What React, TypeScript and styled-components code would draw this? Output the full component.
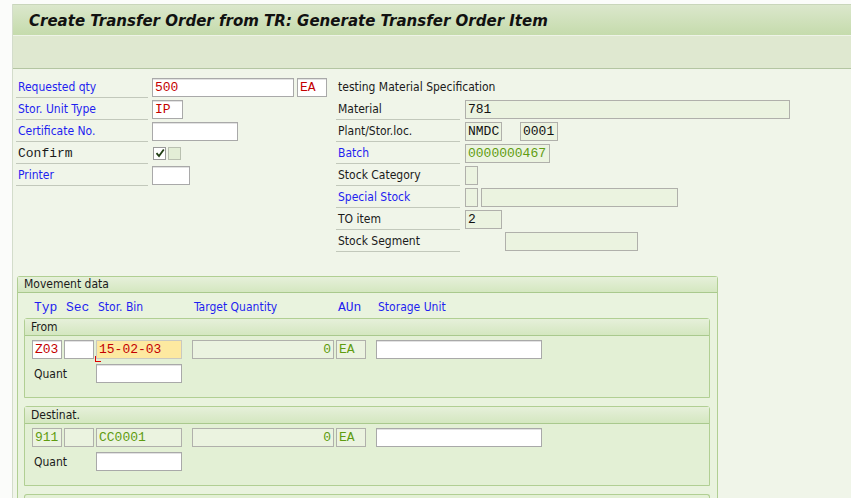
import React from "react";
import styled, { createGlobalStyle, css } from "styled-components";

const GlobalStyle = createGlobalStyle`
  html, body { margin: 0; padding: 0; background: #fbfcfa; overflow: hidden; }
  body { font-family: "DejaVu Sans Condensed", "DejaVu Sans", sans-serif; }
`;

const SANS = `"DejaVu Sans Condensed", "DejaVu Sans", sans-serif`;
const MONO = `"Liberation Mono", "DejaVu Sans Mono", monospace`;

const Page = styled.div`
  display: flex;
  width: 851px;
  height: 498px;
  overflow: hidden;
  background: #fbfcfa;
`;

const Strip = styled.div`
  width: 12px;
  flex: none;
  background: #fbfcfa;
`;

const Main = styled.div`
  flex: 1;
  margin-top: 4px;
  border-left: 1px solid #d3dccb;
  display: flex;
  flex-direction: column;
  min-width: 0;
`;

const TitleBar = styled.div`
  flex: none;
  height: 30px;
  border-top: 1px solid #c9d6bb;
  background: linear-gradient(#dbe7cc, #c5dbac);
  display: flex;
  align-items: center;
  padding-left: 16px;
  border-bottom: 1px solid #eef3e7;
`;

const Title = styled.h1`
  margin: 0;
  font-family: ${SANS};
  font-size: 16.7px;
  font-weight: bold;
  font-style: italic;
  color: #111;
  white-space: nowrap;
`;

const Toolbar = styled.div`
  flex: none;
  height: 32px;
  background: #dfe8d0;
  border-bottom: 1px solid #b4c5a2;
`;

const Content = styled.div`
  flex: 1 0 auto;
  background: #f0f5e9;
  padding: 7px 0 0 3px;
  display: flex;
  flex-direction: column;
`;

const TopForm = styled.div`
  display: flex;
`;

const Col = styled.div<{ $w?: number }>`
  display: flex;
  flex-direction: column;
  width: ${(p) => (p.$w ? `${p.$w}px` : "auto")};
`;

const Row = styled.div<{ $labelW: number; $gap: number }>`
  display: grid;
  grid-template-columns: ${(p) => p.$labelW}px auto;
  column-gap: ${(p) => p.$gap}px;
  height: 22px;
  align-items: center;
`;

const Label = styled.div<{ $tone?: "blue" | "black"; $mono?: boolean; $line?: boolean }>`
  height: 21px;
  line-height: 21px;
  box-sizing: border-box;
  padding-left: 2px;
  font-family: ${(p) => (p.$mono ? MONO : SANS)};
  font-size: ${(p) => (p.$mono ? "13px" : "12px")};
  color: ${(p) => (p.$tone === "blue" ? "#1f1ff0" : "#1a1a1a")};
  border-bottom: ${(p) => (p.$line === false ? "1px solid transparent" : "1px solid #c2c8bb")};
  white-space: nowrap;
`;

const Fields = styled.div`
  display: flex;
  align-items: center;
`;

type Kind = "input" | "readonly" | "yellow" | "disabled";
type Tone = "black" | "red" | "green";

const Field = styled.div<{ $w: number; $kind?: Kind; $tone?: Tone; $ml?: number; $right?: boolean }>`
  position: relative;
  box-sizing: border-box;
  width: ${(p) => p.$w}px;
  height: 19px;
  margin-left: ${(p) => p.$ml ?? 0}px;
  border: 1px solid #a9a9a9;
  font-family: ${MONO};
  font-size: 13px;
  line-height: 17px;
  padding: 0 2px;
  text-align: ${(p) => (p.$right ? "right" : "left")};
  white-space: nowrap;
  overflow: hidden;
  color: ${(p) => (p.$tone === "red" ? "#c40000" : p.$tone === "green" ? "#5f9c10" : "#111")};
  ${(p) =>
    p.$kind === "readonly"
      ? css`
          background: #ebf3e0;
          border-color: #b0b0ab;
        `
      : p.$kind === "yellow"
      ? css`
          background: #fde9a0;
          border-color: #c9c9c0;
          overflow: visible;
        `
      : p.$kind === "disabled"
      ? css`
          background: #e3efd6;
          border-color: #b0b4aa;
        `
      : css`
          background: #fff;
          border-color: #a9a9a9;
          box-shadow: inset 0 1px 0 #e2e2e2;
        `}
`;

const ErrorMark = styled.span`
  position: absolute;
  left: -2px;
  bottom: -4px;
  width: 5px;
  height: 5px;
  border-left: 1px solid #e00000;
  border-bottom: 1px solid #e00000;
`;

const Check = styled.div<{ $disabled?: boolean; $ml?: number }>`
  box-sizing: border-box;
  width: 13px;
  height: 13px;
  margin-left: ${(p) => p.$ml ?? 0}px;
  border: 1px solid ${(p) => (p.$disabled ? "#b9c0b0" : "#999")};
  background: ${(p) => (p.$disabled ? "#e3eed6" : "#fff")};
  display: flex;
  align-items: center;
  justify-content: center;
`;

const Group = styled.div`
  margin: 24px 0 0 1px;
  width: 701px;
  box-sizing: border-box;
  border: 1px solid #b1cf93;
  border-bottom: none;
  border-radius: 3px 3px 0 0;
  background: #e9f3de;
  flex: 1 0 auto;
`;

const GroupHead = styled.div<{ $h: number }>`
  height: ${(p) => p.$h}px;
  box-sizing: border-box;
  line-height: ${(p) => p.$h - 1}px;
  padding-left: 6px;
  font-family: ${SANS};
  font-size: 12px;
  color: #1a1a1a;
  background: linear-gradient(#e6f0da, #d4e7c0);
  border-bottom: 1px solid #a9c98d;
`;

const GroupBody = styled.div`
  padding: 5px 7px 0 6px;
`;

const ColHeads = styled.div`
  display: flex;
  align-items: center;
  height: 18px;
  margin: 0 0 2px 8px;
`;

const ColHead = styled.div<{ $w: number; $mono?: boolean }>`
  width: ${(p) => p.$w}px;
  padding-left: 2px;
  box-sizing: border-box;
  font-family: ${(p) => (p.$mono ? MONO : SANS)};
  font-size: ${(p) => (p.$mono ? "13px" : "12px")};
  color: #1f1ff0;
  white-space: nowrap;
`;

const SubGroup = styled.div<{ $open?: boolean }>`
  box-sizing: border-box;
  border: 1px solid #b1cf93;
  border-radius: 3px 3px 0 0;
  background: #e3f0d5;
  margin-bottom: 8px;
  ${(p) =>
    p.$open &&
    css`
      height: 20px;
      border-bottom: none;
    `}
`;

const SubBody = styled.div`
  padding: 4px 7px 14px 7px;
  display: flex;
  flex-direction: column;
  gap: 5px;
`;

const FieldRow = styled.div`
  display: flex;
  align-items: center;
`;

const QuantLabel = styled.div`
  width: 64px;
  padding-left: 2px;
  box-sizing: border-box;
  font-family: ${SANS};
  font-size: 12px;
  color: #1a1a1a;
`;

const CheckMark = () => (
  <svg width="10" height="10" viewBox="0 0 10 10">
    <path d="M1.5 5.2 L4 8 L8.8 1.5" fill="none" stroke="#1f3d12" strokeWidth="1.8" />
  </svg>
);

type LeftRow = { label: string; tone: "blue" | "black"; mono?: boolean; content: React.ReactNode };

const leftRows: LeftRow[] = [
  {
    label: "Requested qty",
    tone: "blue",
    content: (
      <>
        <Field $w={142} $tone="red">500</Field>
        <Field $w={30} $ml={3} $tone="red">EA</Field>
      </>
    ),
  },
  { label: "Stor. Unit Type", tone: "blue", content: <Field $w={31} $tone="red">IP</Field> },
  { label: "Certificate No.", tone: "blue", content: <Field $w={86} /> },
  {
    label: "Confirm",
    tone: "black",
    mono: true,
    content: (
      <>
        <Check $ml={1}>
          <CheckMark />
        </Check>
        <Check $disabled $ml={2} />
      </>
    ),
  },
  { label: "Printer", tone: "blue", content: <Field $w={38} /> },
];

type RightRow = { label: string; tone: "blue" | "black"; line?: boolean; content?: React.ReactNode };

const rightRows: RightRow[] = [
  { label: "testing Material Specification", tone: "black", line: false },
  { label: "Material", tone: "black", content: <Field $w={325} $kind="readonly">781</Field> },
  {
    label: "Plant/Stor.loc.",
    tone: "black",
    content: (
      <>
        <Field $w={37} $kind="readonly">NMDC</Field>
        <Field $w={38} $ml={18} $kind="readonly">0001</Field>
      </>
    ),
  },
  { label: "Batch", tone: "blue", content: <Field $w={85} $kind="readonly" $tone="green">0000000467</Field> },
  { label: "Stock Category", tone: "black", content: <Field $w={13} $kind="readonly" /> },
  {
    label: "Special Stock",
    tone: "blue",
    content: (
      <>
        <Field $w={13} $kind="readonly" />
        <Field $w={197} $ml={3} $kind="readonly" />
      </>
    ),
  },
  { label: "TO item", tone: "black", content: <Field $w={37} $kind="readonly">2</Field> },
  { label: "Stock Segment", tone: "black", content: <Field $w={133} $ml={40} $kind="readonly" /> },
];

export default function App() {
  return (
    <>
      <GlobalStyle />
      <Page>
        <Strip />
        <Main>
          <TitleBar>
            <Title>Create Transfer Order from TR: Generate Transfer Order Item</Title>
          </TitleBar>
          <Toolbar />
          <Content>
            <TopForm>
              <Col $w={320}>
                {leftRows.map((r) => (
                  <Row key={r.label} $labelW={132} $gap={4}>
                    <Label $tone={r.tone} $mono={r.mono}>
                      {r.label}
                    </Label>
                    <Fields>{r.content}</Fields>
                  </Row>
                ))}
              </Col>
              <Col>
                {rightRows.map((r) => (
                  <Row key={r.label} $labelW={124} $gap={5}>
                    <Label $tone={r.tone} $line={r.line}>
                      {r.label}
                    </Label>
                    <Fields>{r.content}</Fields>
                  </Row>
                ))}
              </Col>
            </TopForm>

            <Group>
              <GroupHead $h={16}>Movement data</GroupHead>
              <GroupBody>
                <ColHeads>
                  <ColHead $w={32} $mono>Typ</ColHead>
                  <ColHead $w={32} $mono>Sec</ColHead>
                  <ColHead $w={96}>Stor. Bin</ColHead>
                  <ColHead $w={144}>Target Quantity</ColHead>
                  <ColHead $w={40} $mono>AUn</ColHead>
                  <ColHead $w={166}>Storage Unit</ColHead>
                </ColHeads>

                <SubGroup>
                  <GroupHead $h={17}>From</GroupHead>
                  <SubBody>
                    <FieldRow>
                      <Field $w={30} $tone="red">Z03</Field>
                      <Field $w={30} $ml={2} />
                      <Field $w={86} $ml={2} $kind="yellow" $tone="red">
                        15-02-03
                        <ErrorMark />
                      </Field>
                      <Field $w={142} $ml={10} $kind="readonly" $tone="green" $right>0</Field>
                      <Field $w={30} $ml={2} $kind="readonly" $tone="green">EA</Field>
                      <Field $w={166} $ml={10} />
                    </FieldRow>
                    <FieldRow>
                      <QuantLabel>Quant</QuantLabel>
                      <Field $w={86} />
                    </FieldRow>
                  </SubBody>
                </SubGroup>

                <SubGroup>
                  <GroupHead $h={17}>Destinat.</GroupHead>
                  <SubBody>
                    <FieldRow>
                      <Field $w={30} $kind="readonly" $tone="green">911</Field>
                      <Field $w={30} $ml={2} $kind="readonly" />
                      <Field $w={86} $ml={2} $kind="readonly" $tone="green">CC0001</Field>
                      <Field $w={142} $ml={10} $kind="readonly" $tone="green" $right>0</Field>
                      <Field $w={30} $ml={2} $kind="readonly" $tone="green">EA</Field>
                      <Field $w={166} $ml={10} />
                    </FieldRow>
                    <FieldRow>
                      <QuantLabel>Quant</QuantLabel>
                      <Field $w={86} />
                    </FieldRow>
                  </SubBody>
                </SubGroup>

                <SubGroup $open />
              </GroupBody>
            </Group>
          </Content>
        </Main>
      </Page>
    </>
  );
}
